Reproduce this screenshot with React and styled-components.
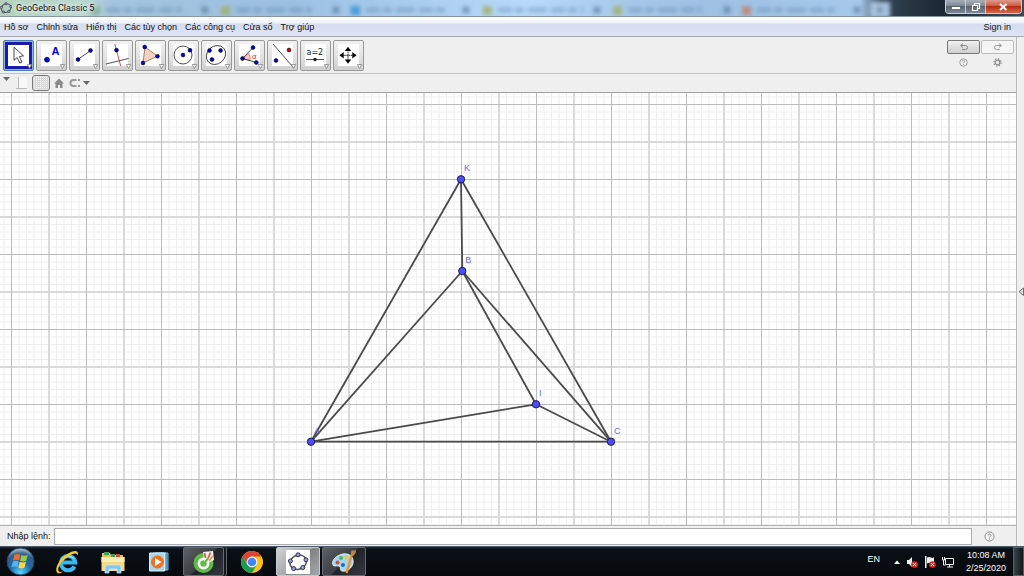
import React from "react";
import styled, { createGlobalStyle, css } from "styled-components";

const GlobalStyle = createGlobalStyle`
  * {
    box-sizing: border-box;
  }
  body {
    margin: 0;
    font-family: "Liberation Sans", Arial, sans-serif;
    font-size: 9px;
    color: #111;
  }
  button {
    font: inherit;
    padding: 0;
    margin: 0;
  }
`;

const Container = styled.div`
  height: 100vh;
  display: flex;
  flex-direction: column;
  overflow: hidden;
  background: #efefef;
`;

/* title bar */

const TitleBar = styled.header`
  position: relative;
  height: 17px;
  flex: none;
  display: flex;
  align-items: center;
  overflow: hidden;
  border-bottom: 1px solid #8a96a3;
  background: linear-gradient(
    90deg,
    #b4d3bd 0%,
    #b9d8cf 8%,
    #a3c5df 11%,
    #9cc0e2 28%,
    #a9cdee 40%,
    #b7dafb 52%,
    #a6c9ea 61%,
    #9dc0e3 70%,
    #a4c8ea 80%,
    #a6c8e8 84%,
    #3a4c5e 86%,
    #2c3a48 88%,
    #1b2733 92%,
    #3b4a58 100%
  );
`;

const GlassTabs = styled.svg`
  position: absolute;
  inset: 0;
  width: 100%;
  height: 100%;
`;

const AppTitle = styled.h1`
  position: relative;
  flex: 1;
  display: flex;
  align-items: center;
  gap: 4px;
  margin: 0;
  font: 9px Roboto, "Open Sans", sans-serif;
  text-shadow: 0 0 5px #fff, 0 0 5px #fff;
`;

const WindowButtons = styled.div`
  position: relative;
  align-self: flex-start;
  display: flex;
  margin-right: 2px;
  border: 1px solid #c6ced6;
  border-top: 0;
  border-radius: 0 0 4px 4px;
  overflow: hidden;
`;

const WindowButton = styled.button`
  width: ${(props) => (props.$close ? "35px" : "20px")};
  height: 13px;
  display: flex;
  align-items: center;
  justify-content: center;
  border: 0;
  border-right: ${(props) => (props.$close ? "0" : "1px solid #c6ced6")};
  background: ${(props) =>
    props.$close
      ? "linear-gradient(#df9a8c, #cf5b43 45%, #b62d13 50%, #d4684d)"
      : "linear-gradient(#a6b0ba, #7d8893 45%, #56626e 50%, #7c8a97)"};
`;

/* menu */

const MenuBar = styled.nav`
  height: 20px;
  flex: none;
  display: flex;
  align-items: center;
  gap: 8px;
  padding: 0 13px 0 4px;
  border-bottom: 1px solid #a5a7ad;
  background: linear-gradient(#fff 0, #eef1f8 6px, #d5dcef 7px, #dfe4f5 100%);
`;

const MenuItem = styled.button`
  border: 0;
  background: none;
  color: #111;
  white-space: nowrap;
  margin-left: ${(props) => (props.$end ? "auto" : "0")};
`;

/* workspace */

const Workspace = styled.div`
  flex: 1;
  min-height: 0;
  display: flex;
`;

const Main = styled.main`
  flex: 1;
  min-width: 0;
  display: flex;
  flex-direction: column;
`;

const SideStrip = styled.button`
  width: 8px;
  flex: none;
  display: flex;
  align-items: center;
  justify-content: flex-end;
  border: 0;
  border-left: 1px solid #bcbcbc;
  background: #efefef;
`;

const ToolBar = styled.div`
  flex: none;
  display: flex;
  align-items: flex-start;
  gap: 2px;
  padding: 3px 2px 2px 3px;
  border-bottom: 1px solid #c2c2c2;
`;

const ToolButton = styled.button`
  width: 31px;
  height: 31px;
  border: 1px solid #999;
  border-radius: 2px;
  background: linear-gradient(#f1f1f1 0, #e4e4e4 50%, #cfcfcf 100%);

  ${(props) =>
    props.$active &&
    css`
      border-color: #4a7fb0;
      background: #8ab8dc;
    `}

  svg {
    display: block;
    width: 100%;
    height: 100%;
  }
`;

const Actions = styled.div`
  margin-left: auto;
  display: grid;
  grid-template-columns: 33px 33px;
  gap: 1px;
  justify-items: center;
`;

const ActionButton = styled.button`
  width: 100%;
  height: 14px;
  display: flex;
  align-items: center;
  justify-content: center;
  border: 1px solid ${(props) => (props.$faded ? "#b9bcbc" : "#777")};
  border-radius: 2px;
  background: ${(props) =>
    props.$faded ? "#f4f4f4" : "linear-gradient(#f2f2f2, #dedede 50%, #cfcfcf)"};
`;

const PlainButton = styled.button`
  display: flex;
  align-items: center;
  justify-content: center;
  height: 14px;
  border: 0;
  background: none;
`;

const StyleBar = styled.div`
  height: 19px;
  flex: none;
  display: flex;
  align-items: center;
  gap: 4px;
  padding-left: 2px;
  border-bottom: 1px solid #a0a0a0;
`;

const StyleBarHandle = styled(PlainButton)`
  align-self: flex-start;
  width: 8px;
  height: 9px;
`;

const GridToggle = styled(PlainButton)`
  width: 18px;
  height: 16px;
  border: 1px solid #777;
  border-radius: 3px;
  background: #e6e6e6;
`;

const Graphics = styled.svg`
  flex: 1;
  min-height: 0;
  width: 100%;
  display: block;
  background: #fff;
`;

const InputBar = styled.div`
  height: 21px;
  flex: none;
  display: flex;
  align-items: center;
  gap: 3px;
  padding-left: 7px;
  border-top: 1px solid #b5b5b5;
`;

const InputLabel = styled.label`
  white-space: nowrap;
`;

const CommandInput = styled.input`
  flex: 1;
  min-width: 0;
  height: 17px;
  border: 1px solid #abadb3;
  background: #fff;
  font: inherit;
  outline: 0;
`;

const HelpButton = styled(PlainButton)`
  width: 41px;
  padding-right: 12px;
`;

/* taskbar */

const TaskBar = styled.footer`
  height: 30px;
  flex: none;
  display: flex;
  align-items: stretch;
  border-top: 1px solid #4c5967;
  background: linear-gradient(#26313d 0, #0b1016 2px, #07090d 100%);
`;

const StartButton = styled.button`
  width: 45px;
  padding-right: 5px;
  display: flex;
  align-items: center;
  justify-content: center;
  border: 0;
  background: none;
`;

const TaskButton = styled.button`
  width: 44px;
  margin-right: 2px;
  display: flex;
  align-items: center;
  justify-content: center;
  border: 1px solid transparent;
  border-radius: 2px;
  background: none;

  ${(props) =>
    props.$state === "open" &&
    css`
      border-color: #666b70;
      background: linear-gradient(135deg, #5d6165 0, #3a3e42 50%, #1f2327 52%, #35393d 100%);
    `}
  ${(props) =>
    props.$state === "active" &&
    css`
      border-color: #c4c9cd;
      background: linear-gradient(135deg, #d0d2d4 0, #a5a8ab 50%, #7f8386 52%, #a5a8ab 100%);
    `}
  ${(props) =>
    props.$stacked &&
    css`
      width: 41px;
      margin-right: 6px;
      box-shadow: 2px 0 0 #15181b, 3px 0 0 #60656a;
    `}
`;

const Tray = styled.div`
  margin-left: auto;
  display: flex;
  align-items: center;
  gap: 6px;
  color: #fff;
`;

const Language = styled.span`
  align-self: flex-start;
  margin-right: 8px;
  line-height: 24px;
`;

const TrayIcon = styled.svg`
  display: block;
  width: 12px;
  height: 12px;
`;

const Clock = styled.time`
  width: 48px;
  margin-left: 2px;
  text-align: center;
  line-height: 13px;
  white-space: nowrap;
`;

const ShowDesktop = styled.button`
  width: 11px;
  margin-left: -3px;
  align-self: stretch;
  border: 1px solid #56606a;
  background: linear-gradient(90deg, #39424b, #12171c);
`;

const BLUE = "#0000dd";

const Dot = ({ x, y, r = 1.9, fill = BLUE }) => (
  <circle cx={x} cy={y} r={r} fill={fill} stroke="#000" strokeWidth="0.6" />
);

const Tool = ({ label, active, children }) => (
  <ToolButton $active={active} aria-label={label} title={label}>
    <svg viewBox="0 0 29 29">
      {active ? (
        <rect x="2.5" y="2.5" width="24" height="24" fill="#fff" stroke="#1b1ba8" strokeWidth="3" />
      ) : (
        <rect x="4" y="3" width="21" height="22" fill="#fff" />
      )}
      {children}
      <path d="M23.3 23.5h4.4l-2.2 4z" fill="#fff" stroke="#777" strokeWidth="0.7" />
    </svg>
  </ToolButton>
);

const tools = [
  {
    label: "Move",
    drawing: (
      <path
        d="M10 6.3v13l3.2-2.8 2.6 5.6 2.2-1-2.6-5.6 4.2-.6z"
        fill="#fff"
        stroke="#222"
        strokeWidth="0.8"
      />
    ),
  },
  {
    label: "Point",
    drawing: (
      <>
        <Dot x={10} y={18.7} r={2.5} />
        <text x="14.5" y="14" fontSize="11" fontWeight="bold" fill="#0000ee">
          A
        </text>
      </>
    ),
  },
  {
    label: "Segment",
    drawing: (
      <>
        <path d="M8 18.5L20.5 9.5" stroke="#222" strokeWidth="0.8" />
        <Dot x={8} y={18.5} />
        <Dot x={20.5} y={9.5} />
      </>
    ),
  },
  {
    label: "Perpendicular line",
    drawing: (
      <>
        <path d="M3 23L25.5 17.5" stroke="#222" strokeWidth="0.8" />
        <path d="M11.8 3L17.7 25" stroke="#ee3333" strokeWidth="0.9" />
        <Dot x={13.5} y={9.2} />
      </>
    ),
  },
  {
    label: "Polygon",
    drawing: (
      <>
        <path d="M9 6L21.5 15 7 22z" fill="#f0d3c4" stroke="#a06045" strokeWidth="0.8" />
        <Dot x={8.7} y={6} />
        <Dot x={21.5} y={15.3} />
        <Dot x={7} y={22} />
      </>
    ),
  },
  {
    label: "Circle",
    drawing: (
      <>
        <circle cx="14" cy="14" r="9" fill="none" stroke="#222" strokeWidth="0.8" />
        <Dot x={14} y={14} />
        <Dot x={21} y={9.2} />
      </>
    ),
  },
  {
    label: "Ellipse",
    drawing: (
      <>
        <ellipse
          cx="14"
          cy="14"
          rx="10.3"
          ry="8.8"
          transform="rotate(-42 14 14)"
          fill="none"
          stroke="#222"
          strokeWidth="0.8"
        />
        <Dot x={7.5} y={9.5} />
        <Dot x={18.6} y={9.5} />
        <Dot x={10} y={18.5} />
      </>
    ),
  },
  {
    label: "Angle",
    drawing: (
      <>
        <path d="M7.5 17.5L13.5 12.5Q15.8 15.3 15 19.5z" fill="#ffc5c5" stroke="#ee3333" strokeWidth="0.6" />
        <path d="M18 6.5L7.5 17.5 21.5 21.5" fill="none" stroke="#222" strokeWidth="0.8" />
        <text x="17" y="17.5" fontSize="8" fill="#ee2222">
          α
        </text>
        <Dot x={18} y={6.5} />
        <Dot x={7.5} y={17.5} />
        <Dot x={21.3} y={21.5} />
      </>
    ),
  },
  {
    label: "Reflect",
    drawing: (
      <>
        <path d="M5 3L25 26" stroke="#222" strokeWidth="0.8" />
        <Dot x={8} y={19.5} />
        <Dot x={21} y={9} fill="#dd0000" />
      </>
    ),
  },
  {
    label: "Slider",
    drawing: (
      <>
        <text x="5.5" y="13.5" fontSize="8" fill="#222" fontFamily="DejaVu Sans, sans-serif">
          a=2
        </text>
        <path d="M5 18.5h18" stroke="#444" strokeWidth="0.9" />
        <circle cx="14" cy="18.5" r="1.8" fill="#222" />
      </>
    ),
  },
  {
    label: "Move view",
    drawing: (
      <>
        <path d="M14 8.5v12M8 14.3h12" stroke="#000" strokeWidth="0.9" strokeDasharray="1.5 0.7" />
        <path
          d="M14 5.8l-3.2 4.2h6.4zM14 22.8l-3.2-4.2h6.4zM5.5 14.3l4.2-3.2v6.4zM22.5 14.3l-4.2-3.2v6.4z"
          fill="#000"
        />
      </>
    ),
  },
];

const menus = [
  "Hồ sơ",
  "Chỉnh sửa",
  "Hiển thị",
  "Các tùy chọn",
  "Các công cụ",
  "Cửa sổ",
  "Trợ giúp",
];

// positions inside the graphics view
const points = {
  A: { x: 311, y: 348.7 },
  B: { x: 462.3, y: 178 },
  C: { x: 611, y: 348.7 },
  I: { x: 536, y: 311.3 },
  K: { x: 461, y: 86.3 },
};
const segments = ["KA", "KC", "KB", "BA", "BC", "BI", "AI", "IC", "AC"];

const GRID_ORIGIN = 11.5;
const GRID_STEP = 37.5;

const GeoLogo = ({ size, filled }) => {
  const nodes = [
    [12, 4.8],
    [20, 9.8],
    [16.8, 17.6],
    [7.7, 18.6],
    [4.4, 11],
  ];
  return (
    <svg width={size} height={size} viewBox={filled ? "0 0 24 24" : "2 2 20 20"}>
      {filled && <rect width="24" height="24" rx="1" fill="#fff" />}
      <ellipse
        cx="12.2"
        cy="12.2"
        rx="8.4"
        ry="7"
        transform="rotate(-22 12.2 12.2)"
        fill="none"
        stroke="#555"
        strokeWidth="1.5"
      />
      {nodes.map(([x, y]) => (
        <circle key={x} cx={x} cy={y} r="2" fill="#9a9aff" stroke="#222" strokeWidth="0.9" />
      ))}
    </svg>
  );
};

const HelpIcon = ({ size }) => (
  <svg width={size} height={size} viewBox="0 0 12 12">
    <circle cx="6" cy="6" r="5" fill="none" stroke="#888" strokeWidth="1" />
    <path
      d="M4.4 4.7c0-2 3.2-2 3.2 0 0 1.1-1.6 1.1-1.6 2.5M6 8.2v1.1"
      fill="none"
      stroke="#888"
      strokeWidth="1"
    />
  </svg>
);

const backgroundTabs = [
  { x: 106, w: 76, close: 205, mark: "#7ba98e" },
  { x: 236, w: 76, close: 336, mark: "#a4ae62" },
  { x: 366, w: 82, close: 466, mark: "#2f8fd0" },
  { x: 498, w: 86, close: 597, mark: "#a4ae62" },
  { x: 628, w: 74, close: 727, mark: "#a4ae62" },
  { x: 757, w: 78, close: 857, mark: "#c07e68" },
];

const Title = () => (
  <TitleBar>
    <GlassTabs aria-hidden="true">
      <defs>
        <filter id="glass" x="-10%" y="-50%" width="120%" height="200%">
          <feGaussianBlur stdDeviation="2" />
        </filter>
      </defs>
      <g filter="url(#glass)">
        {backgroundTabs.map((tab) => (
          <g key={tab.x}>
            <rect x={tab.x - 15} y="6" width="9" height="9" fill={tab.mark} fillOpacity="0.8" />
            <path
              d={`M${tab.x} 10h${tab.w}`}
              stroke="#4d7296"
              strokeOpacity="0.35"
              strokeWidth="5"
              strokeDasharray="14 3 9 4 19 4"
            />
            <path
              d={`M${tab.close - 3} 7l6 6m0-6l-6 6`}
              stroke="#4d6c8a"
              strokeOpacity="0.7"
              strokeWidth="2.5"
            />
          </g>
        ))}
        <rect x="870" y="2" width="20" height="16" fill="#a9c4df" />
        <path d="M880 6v8M876 10h8" stroke="#5d7c9a" strokeWidth="2" />
      </g>
    </GlassTabs>
    <AppTitle>
      <GeoLogo size={12} />
      GeoGebra Classic 5
    </AppTitle>
    <WindowButtons>
      <WindowButton aria-label="Minimize">
        <svg width="10" height="8">
          <rect x="1" y="4" width="8" height="2" fill="#fff" />
        </svg>
      </WindowButton>
      <WindowButton aria-label="Restore">
        <svg width="10" height="10" fill="none" stroke="#fff" strokeWidth="1.2">
          <path d="M3.5 3V1.5h5v5H7M1.5 3.5h5v5h-5z" />
        </svg>
      </WindowButton>
      <WindowButton $close aria-label="Close">
        <svg width="9" height="8" stroke="#fff" strokeWidth="2">
          <path d="M1 1l6.5 6M7.5 1L1 7" />
        </svg>
      </WindowButton>
    </WindowButtons>
  </TitleBar>
);

const GridLines = ({ count, step, offset = 0, ...stroke }) => (
  <g {...stroke}>
    {Array.from({ length: count }, (_, i) => {
      const at = GRID_ORIGIN + offset + i * step;
      return (
        <React.Fragment key={i}>
          <line x1={at} x2={at} y1="0" y2="100%" />
          <line x1="0" x2="100%" y1={at} y2={at} />
        </React.Fragment>
      );
    })}
  </g>
);

const Construction = () => (
  <Graphics role="img" aria-label="Triangle KAC with points B and I">
    <GridLines
      count={340}
      step={GRID_STEP / 5}
      offset={-GRID_STEP / 5}
      stroke="#efefef"
      strokeWidth="1.1"
    />
    <GridLines
      count={35}
      step={GRID_STEP * 2}
      offset={GRID_STEP}
      stroke="#dadada"
      strokeWidth="2"
    />
    <GridLines count={35} step={GRID_STEP * 2} stroke="#bcbcbc" strokeWidth="1" />
    {segments.map(([from, to]) => (
      <line
        key={from + to}
        x1={points[from].x}
        y1={points[from].y}
        x2={points[to].x}
        y2={points[to].y}
        stroke="#4a4a4a"
        strokeWidth="1.8"
      />
    ))}
    {Object.entries(points).map(([name, p]) => (
      <g key={name}>
        <text x={p.x + 3} y={p.y - 8} fontSize="9" fill="#6a6af8">
          {name}
        </text>
        <circle cx={p.x} cy={p.y} r="3.7" fill="#4d4dff" stroke="#15153a" strokeWidth="0.9" />
      </g>
    ))}
  </Graphics>
);

const WindowsOrb = () => (
  <svg width="29" height="29" viewBox="0 0 29 29">
    <defs>
      <radialGradient id="orb" cx="50%" cy="90%" r="85%">
        <stop offset="0" stopColor="#55d5ff" />
        <stop offset="0.45" stopColor="#226ba5" />
        <stop offset="0.8" stopColor="#315d87" />
        <stop offset="1" stopColor="#9cb5c9" />
      </radialGradient>
    </defs>
    <circle cx="14.5" cy="14.5" r="13.5" fill="url(#orb)" stroke="#27455f" />
    <path d="M8.3 8q3.2-2 6-.4l-1.3 5.8q-3-1.5-6 .3z" fill="#f26a32" />
    <path d="M15.3 8q3 1.6 6.4 0L20.2 13.8q-3 1.6-6.2 0z" fill="#97ca48" />
    <path d="M6.8 14.7q3-1.8 6-.3l-1.4 5.6q-3-1.4-6 .4z" fill="#56b5ee" />
    <path d="M13.8 14.8q3 1.6 6.2 0L18.5 20.5q-3 1.7-6.2 .1z" fill="#ffd447" />
  </svg>
);

const ExplorerIcon = () => (
  <svg width="26" height="26" viewBox="0 0 26 26">
    <path
      d="M20.5 17.5A7.2 7.2 0 1 1 21.3 13.5H8"
      fill="none"
      stroke="#39b8f2"
      strokeWidth="4"
    />
    <path d="M7 10.5q6-6 13-1" fill="none" stroke="#8be0ff" strokeWidth="1.5" />
    <path
      d="M3.5 24C-1 20 7 7 17 3c6-2.5 8 0 6.5 4 .3-3-2-3.3-6-1.5C9 9.5 2 19 5 22.5c1 1 3 .5 4.5-.5-2 1.8-4.5 3-6 2z"
      fill="#f7c928"
    />
  </svg>
);

const FolderIcon = () => (
  <svg width="26" height="26" viewBox="0 0 26 26">
    <path d="M2 4h8l1 2h12v3H2z" fill="#e8bd55" />
    <path d="M4 3h5v3H4zM11 5h4v3h-4z" fill="#3f9f58" />
    <path d="M16 5h4v3h-4z" fill="#d34b38" />
    <path d="M1.5 8h23v14h-23z" fill="#f4d987" />
    <path d="M1.5 8h23v5h-23z" fill="#fbeeb5" />
    <path
      d="M5 24v-6q0-2 2-2h12q2 0 2 2v6h-4v-4H9v4z"
      fill="#83c7ef"
      stroke="#d6f0ff"
      strokeWidth="0.7"
    />
  </svg>
);

const MediaIcon = () => (
  <svg width="24" height="24" viewBox="0 0 24 24">
    <path d="M9 3h12v17H9z" fill="#316b97" stroke="#6eb4dc" />
    <path d="M6 3h13v17H6z" fill="#5295c1" stroke="#8bc9eb" />
    <path d="M2.5 3h15v18h-15z" fill="#a9d5ee" stroke="#d7effb" />
    <circle cx="10.5" cy="12" r="6.5" fill="#ef731f" />
    <path d="M8 8v8l6.5-4z" fill="#fff" />
  </svg>
);

const CocCocIcon = () => (
  <svg width="24" height="24" viewBox="0 0 24 24">
    <circle cx="11.5" cy="13" r="10" fill="#5dbb46" />
    <path d="M12 11L11 2l10-1 1 9-6 3z" fill="#f6f6ef" />
    <path d="M13.5 8l-1-5M16 8.5l2.5-6" stroke="#dd5a45" strokeWidth="1.8" />
    <path d="M17 11l4-5" stroke="#e58c3c" strokeWidth="1.5" />
    <circle cx="11.5" cy="13.5" r="4.6" fill="none" stroke="#fff" strokeWidth="2.6" />
    <path d="M13 12l3-3.5" stroke="#60b948" strokeWidth="2.2" />
  </svg>
);

const ChromeIcon = () => (
  <svg width="24" height="24" viewBox="0 0 24 24">
    <circle cx="12" cy="12" r="11" fill="#fbc116" />
    <path d="M2.5 6.5A11 11 0 0 1 21.5 6.5H12L7.5 14.5z" fill="#dc4437" />
    <path d="M2.5 6.5A11 11 0 0 0 12 23l4.7-8.5H7.2z" fill="#179c52" />
    <circle cx="12" cy="12" r="5.4" fill="#fff" />
    <circle cx="12" cy="12" r="4.3" fill="#4285f4" />
  </svg>
);

const PaintIcon = () => (
  <svg width="26" height="26" viewBox="0 0 26 26">
    <path
      d="M12 5c6-1 11 3 10 9-.8 5-6 9-11 8-3-.7-.5-4-3-5-2-1-5 1-6-1C0 11 6 6 12 5z"
      fill="#a8d5ee"
      stroke="#dff3fc"
    />
    <circle cx="6.5" cy="13.5" r="2" fill="#e44a35" />
    <circle cx="10" cy="9" r="2" fill="#58b648" />
    <circle cx="15.5" cy="8" r="2" fill="#f3c43b" />
    <circle cx="12" cy="16" r="2" fill="#236ca9" />
    <path d="M15.5 24L21 5" stroke="#ec9331" strokeWidth="2.4" />
    <path d="M20 6q-1-3 1-5 1 1 4 0 0 4-3 6z" fill="#b68446" />
  </svg>
);

const RedCross = () => (
  <>
    <circle cx="8.5" cy="8.5" r="3.3" fill="#d92f24" />
    <path d="M7.2 7.2l2.6 2.6m0-2.6L7.2 9.8" stroke="#fff" />
  </>
);

const App = () => {
  return (
    <>
      <GlobalStyle />
      <Container>
        <Title />
        <MenuBar>
          {menus.map((item) => (
            <MenuItem key={item}>{item}</MenuItem>
          ))}
          <MenuItem $end>Sign in</MenuItem>
        </MenuBar>

        <Workspace>
          <Main>
            <ToolBar>
              {tools.map((tool, i) => (
                <Tool key={tool.label} label={tool.label} active={i === 0}>
                  {tool.drawing}
                </Tool>
              ))}
              <Actions>
                <ActionButton aria-label="Undo">
                  <svg width="10" height="8" fill="none" stroke="#888">
                    <path d="M4 .5L1.5 2.5 4 4.5M2 2.5h4.5q2 0 2 2t-2 2H3" />
                  </svg>
                </ActionButton>
                <ActionButton $faded aria-label="Redo">
                  <svg width="10" height="8" fill="none" stroke="#999">
                    <path d="M6 .5l2.5 2L6 4.5M8 2.5H3.5q-2 0-2 2t2 2H7" />
                  </svg>
                </ActionButton>
                <PlainButton aria-label="Help">
                  <HelpIcon size={9} />
                </PlainButton>
                <PlainButton aria-label="Settings">
                  <svg width="9" height="9" viewBox="0 0 9 9" fill="none" stroke="#888">
                    <circle cx="4.5" cy="4.5" r="2.3" strokeWidth="1.2" />
                    <circle
                      cx="4.5"
                      cy="4.5"
                      r="3.6"
                      strokeWidth="1.2"
                      strokeDasharray="1.4 1.427"
                    />
                  </svg>
                </PlainButton>
              </Actions>
            </ToolBar>

            <StyleBar>
              <StyleBarHandle aria-label="Toggle style bar">
                <svg width="7" height="4">
                  <path d="M0 0h7L3.5 4z" fill="#666" />
                </svg>
              </StyleBarHandle>
              <PlainButton aria-label="Axes">
                <svg width="14" height="13" fill="none" stroke="#bbb">
                  <rect x="4" y="0" width="9" height="11" fill="#f8f8f8" stroke="none" />
                  <path d="M4.5 0v12M2 11.5h11" />
                </svg>
              </PlainButton>
              <GridToggle aria-label="Grid" aria-pressed="true">
                <svg width="13" height="12">
                  <rect width="13" height="12" fill="#fff" />
                  <path
                    d="M.5 0v12M2.5 0v12M4.5 0v12M6.5 0v12M8.5 0v12M10.5 0v12M12.5 0v12M0 1.5h13M0 3.5h13M0 5.5h13M0 7.5h13M0 9.5h13M0 11.5h13"
                    stroke="#d9d9d9"
                  />
                </svg>
              </GridToggle>
              <PlainButton aria-label="Standard view">
                <svg width="10" height="10">
                  <path d="M5 .5L0 5.5h1.5V10H4V7h2v3h2.5V5.5H10z" fill="#8b8b8b" />
                </svg>
              </PlainButton>
              <PlainButton aria-label="Point capturing">
                <svg width="24" height="10">
                  <path
                    d="M8.5 2H5.5a3 3 0 0 0 0 6h3"
                    fill="none"
                    stroke="#999"
                    strokeWidth="2"
                  />
                  <path d="M10 1h2v2h-2zM10 7h2v2h-2z" fill="#999" />
                  <path d="M15 3h7l-3.5 4z" fill="#666" />
                </svg>
              </PlainButton>
            </StyleBar>

            <Construction />

            <InputBar>
              <InputLabel htmlFor="command">Nhập lệnh:</InputLabel>
              <CommandInput id="command" type="text" />
              <HelpButton aria-label="Input help">
                <HelpIcon size={11} />
              </HelpButton>
            </InputBar>
          </Main>
          <SideStrip aria-label="Open sidebar">
            <svg width="6" height="10">
              <path d="M5.5 1v7.5L1 4.7z" fill="#ddd" stroke="#555" strokeWidth="0.8" />
            </svg>
          </SideStrip>
        </Workspace>

        <TaskBar>
          <StartButton aria-label="Start">
            <WindowsOrb />
          </StartButton>
          <TaskButton aria-label="Internet Explorer">
            <ExplorerIcon />
          </TaskButton>
          <TaskButton aria-label="Windows Explorer">
            <FolderIcon />
          </TaskButton>
          <TaskButton aria-label="Media Player">
            <MediaIcon />
          </TaskButton>
          <TaskButton $state="open" $stacked aria-label="Browser">
            <CocCocIcon />
          </TaskButton>
          <TaskButton aria-label="Chrome">
            <ChromeIcon />
          </TaskButton>
          <TaskButton $state="active" aria-label="GeoGebra">
            <GeoLogo size={24} filled />
          </TaskButton>
          <TaskButton $state="open" aria-label="Paint">
            <PaintIcon />
          </TaskButton>

          <Tray>
            <Language>EN</Language>
            <svg width="6" height="4">
              <path d="M0 4l3-3.5L6 4z" fill="#fff" />
            </svg>
            <TrayIcon viewBox="0 0 12 12">
              <path d="M1 4h2l3-3v10L3 8H1z" fill="#eee" />
              <RedCross />
            </TrayIcon>
            <TrayIcon viewBox="0 0 12 12">
              <path d="M1 0h1.5v12H1zM3 1.5q2-1 4 0t3-.5v6q-2 .8-3.5 0T3 7.5z" fill="#eee" />
              <RedCross />
            </TrayIcon>
            <TrayIcon viewBox="0 0 12 12" fill="none" stroke="#eee">
              <path d="M3.5 2.5h8v6h-8zM5 11h6M7.5 9v2M.5 1v3h2V1M1.5 4v5h2" />
            </TrayIcon>
            <Clock>
              10:08 AM
              <br />
              2/25/2020
            </Clock>
            <ShowDesktop aria-label="Show desktop" />
          </Tray>
        </TaskBar>
      </Container>
    </>
  );
};

export default App;
